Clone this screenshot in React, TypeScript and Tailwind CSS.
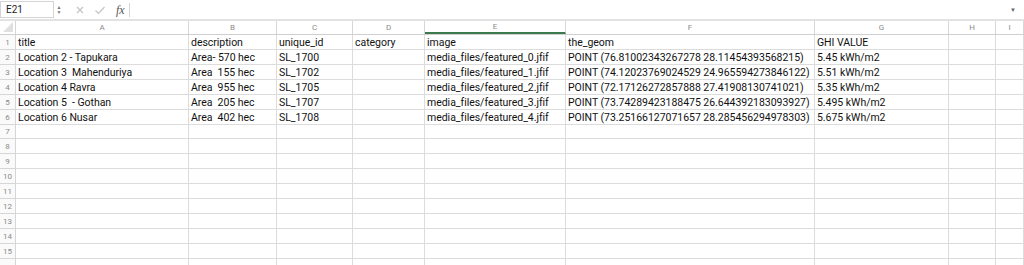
import React from 'react';

const cols = ['A', 'B', 'C', 'D', 'E', 'F', 'G', 'H', 'I'];

const data: string[][] = [
  ['title', 'description', 'unique_id', 'category', 'image', 'the_geom', 'GHI VALUE', '', ''],
  ['Location 2 - Tapukara', 'Area- 570 hec', 'SL_1700', '', 'media_files/featured_0.jfif', 'POINT (76.81002343267278 28.11454393568215)', '5.45 kWh/m2', '', ''],
  ['Location 3  Mahenduriya', 'Area  155 hec', 'SL_1702', '', 'media_files/featured_1.jfif', 'POINT (74.12023769024529 24.965594273846122)', '5.51 kWh/m2', '', ''],
  ['Location 4 Ravra', 'Area  955 hec', 'SL_1705', '', 'media_files/featured_2.jfif', 'POINT (72.17126272857888 27.41908130741021)', '5.35 kWh/m2', '', ''],
  ['Location 5  - Gothan', 'Area  205 hec', 'SL_1707', '', 'media_files/featured_3.jfif', 'POINT (73.74289423188475 26.644392183093927)', '5.495 kWh/m2', '', ''],
  ['Location 6 Nusar', 'Area  402 hec', 'SL_1708', '', 'media_files/featured_4.jfif', 'POINT (73.25166127071657 28.285456294978303)', '5.675 kWh/m2', '', ''],
];

const gridCols = 'grid grid-cols-[16px_173px_88px_76px_72px_141px_249px_134px_47px_1fr]';

const Row: React.FC<{ n?: number; cells: string[] }> = ({ n, cells }) => (
  <div className={`${gridCols} h-[14.93px]`}>
    <div className="border-r border-b border-[#d6d6d6] bg-[#fafafa] text-[8px] text-[#8a8a8a] flex items-end pb-[2px] justify-center leading-none">
      {n}
    </div>
    {cells.map((c, i) => (
      <div
        key={i}
        className="border-r border-b border-[#dcdcdc] text-[10.5px] tracking-[-0.03px] text-[#111] pl-[2px] flex items-end leading-none whitespace-pre overflow-hidden"
      >
        {c}
      </div>
    ))}
  </div>
);

export default function App() {
  const empty = Array(9).fill('');
  return (
    <div className="w-[1024px] h-[265px] overflow-hidden bg-white font-['Roboto',sans-serif]">
      {/* formula bar */}
      <div className="flex items-center h-[21px] border-b-2 border-[#e2e2e2]">
        <div className="w-[54px] h-[17px] border border-[#d4d4d4] text-[10px] text-[#222] flex items-center pl-[5px]">
          E21
        </div>
        <div className="flex flex-col items-center justify-center w-[8px] ml-[1px] text-[#777] leading-none">
          <span className="text-[5px]">▲</span>
          <span className="text-[5px]">▼</span>
        </div>
        <svg width="10" height="10" viewBox="0 0 10 10" className="ml-[12px]">
          <path d="M2 2 L8 8 M8 2 L2 8" stroke="#c4c4c4" strokeWidth="1.2" />
        </svg>
        <svg width="12" height="10" viewBox="0 0 12 10" className="ml-[9px]">
          <path d="M1.5 5.5 L4.5 8.5 L10.5 2" stroke="#c4c4c4" strokeWidth="1.2" fill="none" />
        </svg>
        <span className="ml-[10px] font-['Liberation_Serif',serif] italic text-[12px] text-[#555]">fx</span>
        <div className="ml-[4px] w-px h-[14px] bg-[#d4d4d4]" />
        <div className="flex-1" />
        <span className="text-[6px] text-[#666] mr-[8px]">▼</span>
      </div>
      {/* column headers */}
      <div className={`${gridCols} h-[14px] border-b border-[#cfcfcf]`}>
        <div className="border-r border-[#d6d6d6] relative">
          <svg width="14" height="12" className="absolute right-[1px] bottom-[1px]">
            <path d="M13 1 L13 11 L3 11 Z" fill="#e0e0e0" />
          </svg>
        </div>
        {cols.map((c) => (
          <div
            key={c}
            className={`border-r border-[#d6d6d6] text-[8px] text-[#8a8a8a] flex items-center justify-center leading-none ${
              c === 'E' ? 'border-b-2 border-b-[#3c7a4e]' : ''
            }`}
          >
            {c}
          </div>
        ))}
      </div>
      {data.map((r, i) => (
        <Row key={i} n={i + 1} cells={r} />
      ))}
      {Array.from({ length: 9 }, (_, i) => (
        <Row key={'e' + i} n={i + 7} cells={empty} />
      ))}
      <Row cells={empty} />
    </div>
  );
}
